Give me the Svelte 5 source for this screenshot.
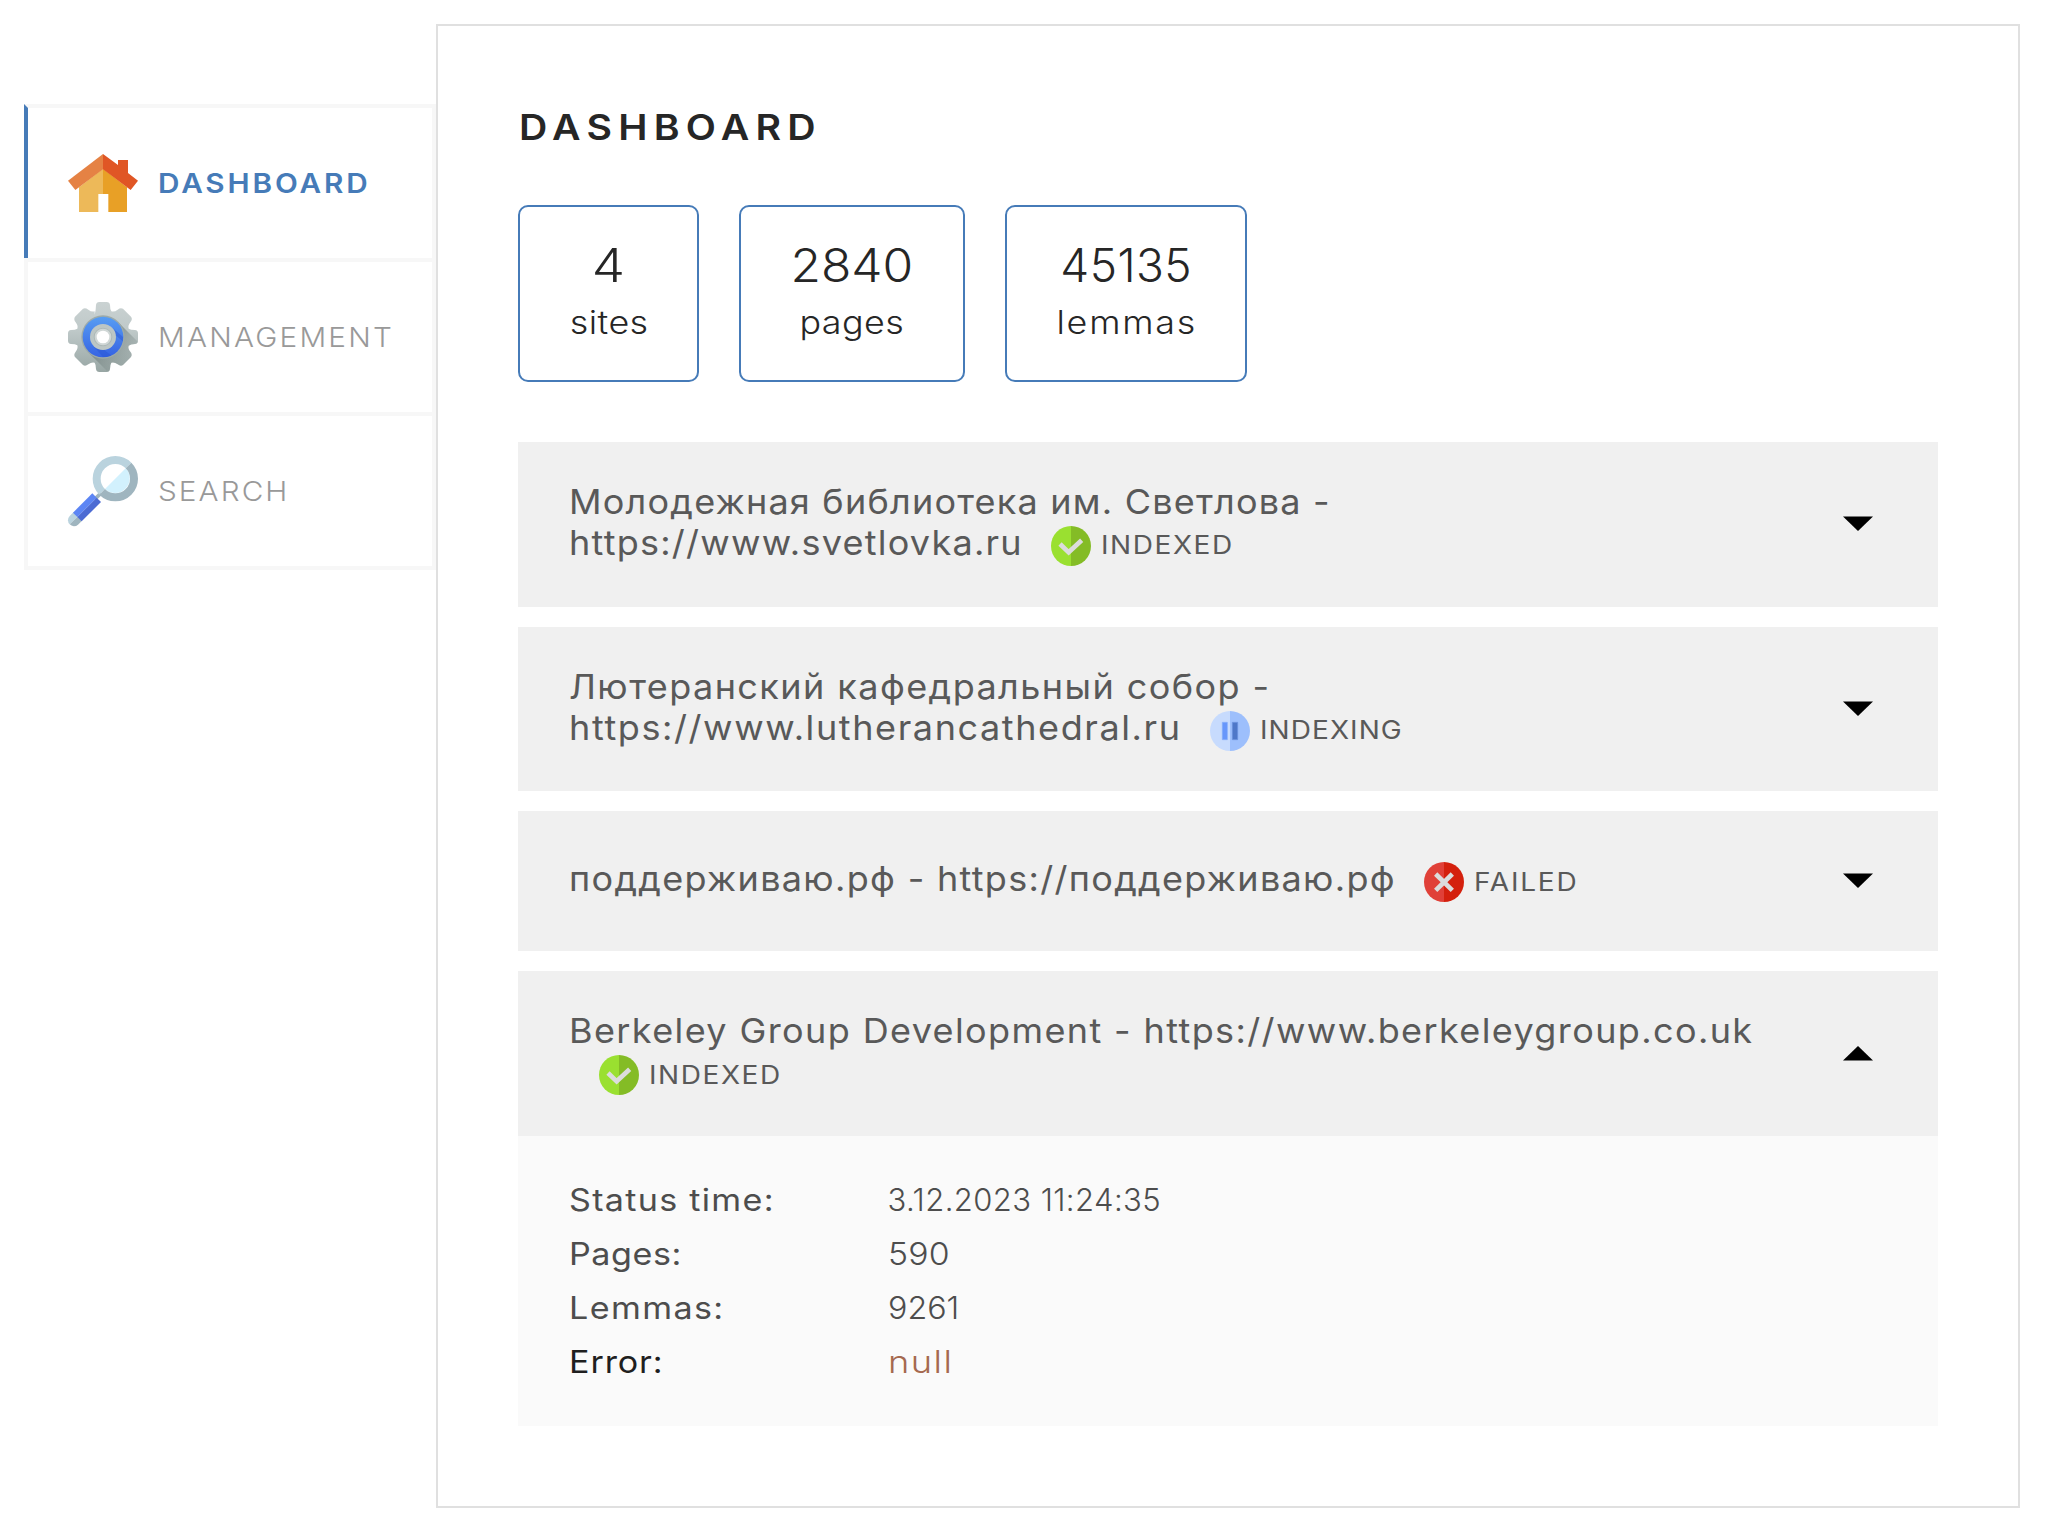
<script>
  // Each text carries its own tracking (px) and horizontal stretch.
  const nav = [
    { icon: 'home', label: 'DASHBOARD', track: 2.6, active: true },
    { icon: 'gear', label: 'MANAGEMENT', track: 2 },
    { icon: 'search', label: 'SEARCH', track: 1.9 },
  ];

  const stats = [
    { value: '4', label: 'sites', valueTrack: 0, valueStretch: 1.15, labelTrack: 0.4 },
    { value: '2840', label: 'pages', valueTrack: 0, valueStretch: 1.08, labelTrack: 0.4 },
    { value: '45135', label: 'lemmas', valueTrack: 0.45, valueStretch: 1, labelTrack: 1.6 },
  ];

  const sites = $state([
    {
      lines: [
        { text: 'Молодежная библиотека им. Светлова -', track: 1.13 },
        { text: 'https://www.svetlovka.ru', track: 1.16, extra: 25.6 },
      ],
      status: 'INDEXED', statusTrack: 1.4,
    },
    {
      lines: [
        { text: 'Лютеранский кафедральный собор -', track: 1.33 },
        { text: 'https://www.lutherancathedral.ru', track: 1.49, extra: 35.2 },
      ],
      status: 'INDEXING', statusTrack: 0.95,
    },
    {
      lines: [{ text: 'поддерживаю.рф - https://поддерживаю.рф', track: 1.22, extra: 46.8 }],
      status: 'FAILED', statusTrack: 1.6,
    },
    {
      lines: [
        { text: 'Berkeley Group Development - https://www.berkeleygroup.co.uk', track: 1.29 },
        { text: '', track: 0 },
      ],
      status: 'INDEXED', statusTrack: 1.4,
      open: true,
      details: [
        { label: 'Status time:', value: '3.12.2023 11:24:35', labelTrack: 1.18, valueTrack: 0.42, stretch: 1 },
        { label: 'Pages:', value: '590', labelTrack: 0.5, valueTrack: 0.2, stretch: 1.09 },
        { label: 'Lemmas:', value: '9261', labelTrack: 1.25, valueTrack: 0, stretch: 1.04 },
        { label: 'Error:', value: 'null', labelTrack: 0.8, valueTrack: 1.2, stretch: 1.17, error: true },
      ],
    },
  ]);
</script>

{#snippet fit(text, track, stretch, extra = 0)}
  <span class="fit" style:letter-spacing="{track}px" style:margin-right="{extra - track}px" style:transform="scaleX({stretch})">{text}</span>
{/snippet}

{#snippet navIcon(name)}
  <svg class="nav-icon" viewBox="0 0 210 210">
    {#if name === 'home'}
      <path fill="#edb959" d="M33 118 105 62v76H91v54H33z" />
      <path fill="#e8a026" d="M105 62 177 118v74h-56v-54h-16z" />
      <path fill="#e58244" d="M105 18 0 98l22 28 83-62z" />
      <path fill="#e05625" d="M105 18 150 51V36h30v39l30 23-22 28-83-62z" />
    {:else if name === 'gear'}
      <defs>
        <linearGradient id="steel" x1="0" y1="0" x2="0" y2="210" gradientUnits="userSpaceOnUse">
          <stop offset="0" stop-color="#cad2d2" />
          <stop offset=".4" stop-color="#bfc9c9" />
          <stop offset="1" stop-color="#98a6a4" />
        </linearGradient>
        <linearGradient id="blue" x1="0" y1="0" x2="0" y2="1">
          <stop offset="0" stop-color="#579df3" />
          <stop offset="1" stop-color="#3663e3" />
        </linearGradient>
        <linearGradient id="shade" x1="105" y1="105" x2="178" y2="178" gradientUnits="userSpaceOnUse">
          <stop offset="0" stop-color="#5c6b69" stop-opacity=".65" />
          <stop offset="1" stop-color="#7d8b89" stop-opacity=".12" />
        </linearGradient>
        <path id="gear" d="M80 38Q84 22 84 9Q85 0 94 0H116Q125 0 126 9Q126 22 130 28Q139 31 149 23Q157 16 165 20L189 44Q195 51 187 61Q179 71 182 80Q188 84 201 84Q210 85 210 94V116Q210 125 201 126Q188 126 182 131Q179 139 187 149Q194 157 189 165L165 189Q158 194 149 187Q139 179 130 182Q126 188 126 201Q125 210 116 210H94Q85 210 84 201Q84 188 80 182Q71 179 61 187Q52 194 45 189L21 165Q16 158 23 149Q31 139 28 130Q22 126 9 126Q0 125 0 116V94Q0 85 9 84Q22 84 28 80Q31 71 23 61Q16 52 21 44L45 20Q52 16 61 23Q71 31 80 28Z" />
        <clipPath id="gear-clip"><use href="#gear" /></clipPath>
      </defs>
      <use href="#gear" fill="url(#steel)" />
      <path clip-path="url(#gear-clip)" fill="url(#shade)" d="M150 60 260 170 170 260 60 150z" />
      <circle cx="105" cy="105" r="65" fill="#9daaa8" />
      <circle cx="105" cy="105" r="61" fill="url(#blue)" />
      <path fill="#2954d3" opacity=".45" d="M133 77 165 105A61 61 0 0 1 164 118L143 100zM77 133 105 165A61 61 0 0 0 130 161L105 140z" />
      <circle cx="105" cy="105" r="39" fill="#bcc6c5" />
      <circle cx="105" cy="105" r="28" fill="#adb9b8" />
      <circle cx="105" cy="105" r="25" fill="#d0d7d6" />
      <circle cx="105" cy="105" r="19" fill="#fff" />
    {:else}
      <path stroke="#9fb5bf" stroke-width="11" d="M98 112 80 130" />
      <circle cx="142" cy="68" r="44" fill="#fff" />
      <path fill="#d2f1fd" d="M173.100 36.900A44 44 0 0 1 110.900 99.100z" />
      <path fill="none" stroke="#bad3de" stroke-width="24" d="M181.600 28.400A56 56 0 0 0 102.400 107.600" />
      <path fill="none" stroke="#9fb5bf" stroke-width="24" d="M181.600 28.400A56 56 0 0 1 102.400 107.600" />
      <path fill="#bad3de" d="M17 168 5 180A18 18 0 0 0 5 205L29 182z" />
      <path fill="#9fb5bf" d="M42 194 30 206A18 18 0 0 1 5 205L29 182z" />
      <path fill="#5c85f4" d="M73 112 86 125 28 183 15 170z" />
      <path fill="#4c6bd3" d="M86 125 99 138 41 196 28 183z" />
    {/if}
  </svg>
{/snippet}

{#snippet statusIcon(status)}
  <svg class="status-icon" viewBox="0 0 120 120">
    {#if status === 'INDEXED'}
      <path fill="#9ae030" d="M60 0A60 60 0 0 0 60 120z" />
      <path fill="#84bc26" d="M60 0A60 60 0 0 1 60 120z" />
      <path fill="none" stroke="#dcdcdc" stroke-width="14" d="M27 54 53 79 92 43" />
    {:else if status === 'INDEXING'}
      <path fill="#c7dbfd" d="M60 0A60 60 0 0 0 60 120z" />
      <path fill="#9dbffc" d="M60 0A60 60 0 0 1 60 120z" />
      <path fill="#6797fb" stroke="#82aafb" stroke-width="2" d="M37 34h15v52H37z" />
      <path fill="#4e77c8" stroke="#6a92de" stroke-width="2" d="M67 34h16v52H67z" />
    {:else}
      <path fill="#e04038" d="M60 0A60 60 0 0 0 60 120z" />
      <path fill="#d4200d" d="M60 0A60 60 0 0 1 60 120z" />
      <path fill="none" stroke="#dcdcdc" stroke-width="14" d="M35 36 85 85M85 36 35 85" />
    {/if}
  </svg>
{/snippet}

<div class="page">
  <nav class="menu">
    {#each nav as item}
      <a class="menu-item" class:active={item.active} href="#{item.icon}">
        {@render navIcon(item.icon)}
        {@render fit(item.label, item.track, 1.1)}
      </a>
    {/each}
  </nav>

  <main class="panel">
    <h1>{@render fit('DASHBOARD', 5.6, 1.12)}</h1>

    <div class="stats">
      {#each stats as s}
        <div class="stat">
          <div class="stat-value">{@render fit(s.value, s.valueTrack, s.valueStretch)}</div>
          <div class="stat-label">{@render fit(s.label, s.labelTrack, 1.12)}</div>
        </div>
      {/each}
    </div>

    <div class="sites">
      {#each sites as site}
        <section>
          <button class="site-head" class:single={site.lines.length === 1} onclick={() => (site.open = !site.open)}>
            <span class="site-title">
              {#each site.lines as line, i}
                <span class="line">
                  {@render fit(line.text, line.track, 1.06, line.extra)}
                  {#if i === site.lines.length - 1}
                    <span class="status">
                      {@render statusIcon(site.status)}
                      {@render fit(site.status, site.statusTrack, 1.12)}
                    </span>
                  {/if}
                </span>
              {/each}
            </span>
            <svg class="arrow" class:up={site.open} viewBox="0 0 30 15"><path d="M0 .5H30L15 15z" /></svg>
          </button>
          {#if site.open && site.details}
            <dl class="details">
              {#each site.details as d}
                <div class="row" class:error={d.error}>
                  <dt>{@render fit(d.label, d.labelTrack, 1.1)}</dt>
                  <dd>{@render fit(d.value, d.valueTrack, d.stretch)}</dd>
                </div>
              {/each}
            </dl>
          {/if}
        </section>
      {/each}
    </div>
  </main>
</div>

<style>
  :global(body) { background: #fff; }
  .page {
    display: flex;
    align-items: flex-start;
    width: 2046px;
    height: 1537px;
    box-sizing: border-box;
    padding: 24px 26px 0 24px;
    font-family: Inter, "Open Sans", sans-serif;
    color: #262626;
    white-space: nowrap;
  }
  .fit { display: inline-block; transform-origin: left center; }
  .menu { width: 412px; margin-top: 80px; flex: none; }
  .menu-item {
    display: flex;
    align-items: center;
    gap: 20px;
    height: 158px;
    box-sizing: border-box;
    padding-left: 40px;
    border: 4px solid #f7f7f7;
    font-size: 27px;
    font-weight: 300;
    color: #999;
    text-decoration: none;
  }
  .menu-item + .menu-item { border-top: 0; height: 154px; }
  .menu-item.active {
    border-bottom: 0;
    height: 154px;
    border-left-color: #467bb8;
    font-weight: 600;
    color: #467bb8;
  }
  .menu-item.active + .menu-item { border-top: 4px solid #f7f7f7; height: 158px; }
  .nav-icon { width: 70px; height: 70px; flex: none; overflow: visible; }
  .panel {
    flex: 1;
    height: 1484px;
    box-sizing: border-box;
    border: 2px solid #e0e0e0;
    padding: 80px;
  }
  h1 {
    margin: 0 0 57px;
    padding-left: 1px;
    font-size: 35px;
    line-height: 42px;
    font-weight: 600;
  }
  .stats {
    display: grid;
    grid-template-columns: 181px 226px 242px;
    gap: 40px;
    margin-bottom: 60px;
  }
  .stat {
    height: 177px;
    box-sizing: border-box;
    padding-top: 29px;
    border: 2px solid #467bb8;
    border-radius: 10px;
    text-align: center;
    font-weight: 300;
  }
  .stat .fit { transform-origin: center; }
  .stat-value { font-size: 46px; line-height: 58px; margin-bottom: 9px; }
  .stat-label { font-size: 32px; line-height: 40px; }
  .sites { display: grid; gap: 20px; }
  .site-head {
    display: flex;
    align-items: center;
    justify-content: space-between;
    width: 100%;
    height: 164.700px;
    box-sizing: border-box;
    padding: 0 65px 0 50px;
    border: 0;
    background: #f0f0f0;
    font: inherit;
    font-size: 34px;
    font-weight: 400;
    color: #595959;
    text-align: left;
  }
  .site-head.single { height: 140px; }
  .site-title { display: block; padding-bottom: 5px; }
  .line { display: flex; height: 41px; line-height: 41px; }
  .line > .fit, .row .fit { margin-left: .6px; }
  .status {
    display: flex;
    align-items: center;
    gap: 10px;
    height: 41px;
    box-sizing: border-box;
    padding-top: 7px;
    margin-left: 30px;
    font-size: 25px;
  }
  .status-icon { width: 40px; height: 40px; flex: none; }
  .arrow { width: 30px; height: 15px; flex: none; margin-bottom: 2px; }
  .arrow.up { transform: rotate(180deg); margin-bottom: 0; }
  .details {
    margin: 0;
    padding: 37px 50px;
    background: #fafafa;
    font-size: 31px;
    line-height: 54px;
    color: #4d4d4d;
  }
  .row { display: grid; grid-template-columns: 319px 1fr; }
  dt { font-weight: 400; }
  dd { margin: 0; font-weight: 300; }
  .error dt { color: #1f1f1f; }
  .error dd { color: #a5694f; }
</style>
